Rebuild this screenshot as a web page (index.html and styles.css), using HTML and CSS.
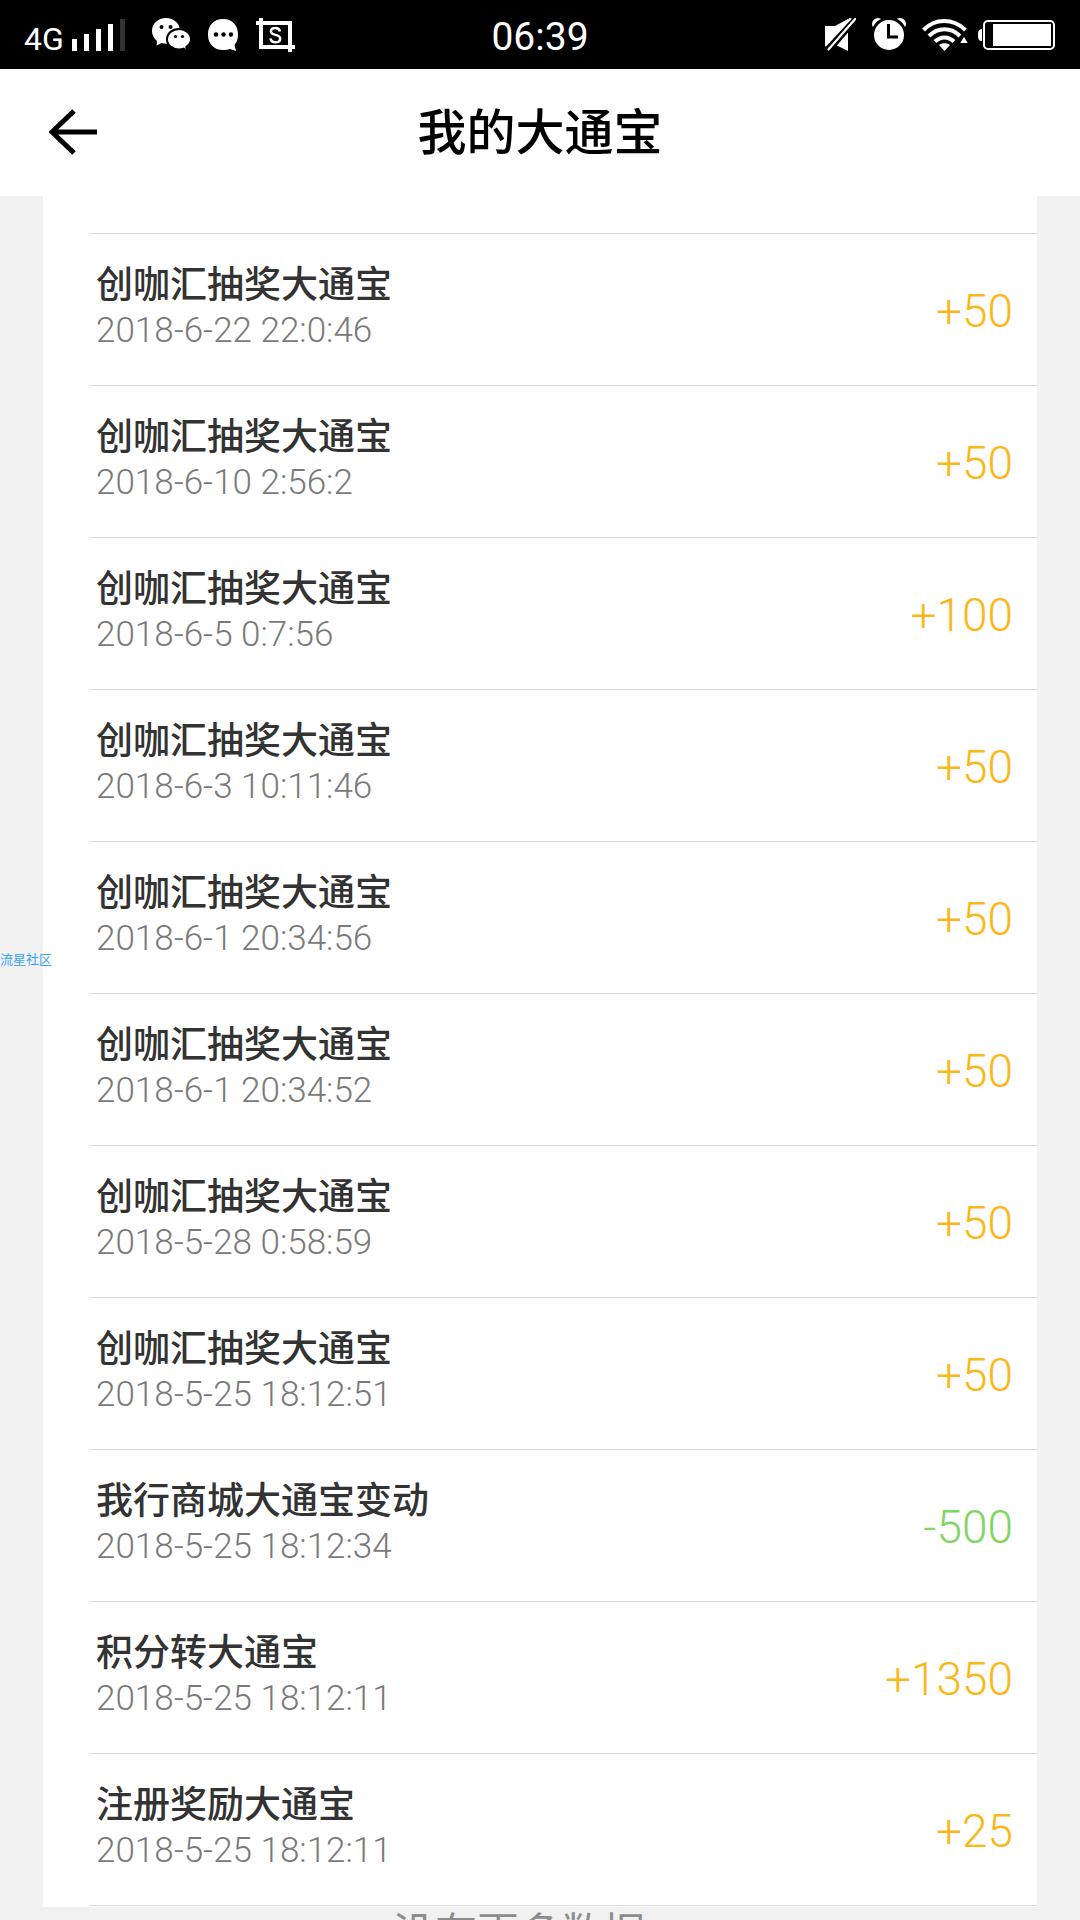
FILE: index.html
```html
<!DOCTYPE html>
<html lang="zh-CN">
<head>
<meta charset="utf-8">
<meta name="viewport" content="width=device-width, initial-scale=1">
<title>我的大通宝</title>
<link rel="stylesheet" href="styles.css">
</head>
<body>
<div class="app">
  <div class="status">
    <div class="status-side">
      <span class="network">4G</span>
      <svg class="signal" width="54" height="32" viewBox="0 0 54 32" fill="#fff" aria-hidden="true"><path d="M0 20h5v12H0zM12 15h5v17h-5zM24 10h5v22h-5zM36 5h5v27h-5z"/><path fill="#333" d="M48 0h5v32h-5z"/></svg>
      <svg class="wechat" width="38" height="34" viewBox="0 0 38 34" aria-hidden="true"><path fill="#fff" d="M14 0C6 0 0 5.500 0 13c0 4 2 7.500 5 10l-.5 4.500 5-2.500c2 .6 4 .8 6.500.7C27 25 28 18 28 13 28 5.500 22 0 14 0z"/><path fill="#fff" stroke="#000" stroke-width="2" d="M27 11c-6.500 0-12 4.300-12 10.200S20.500 31.500 27 31.500c1.700 0 3.200-.2 4.600-.8l3.400 2.800-.7-4.600c2.700-1.900 4.700-4.500 4.700-7.700C39 15.300 33.500 11 27 11z"/><g fill="#000"><circle cx="9.500" cy="9" r="2"/><circle cx="18.500" cy="9" r="2"/><circle cx="23.500" cy="18.500" r="1.600"/><circle cx="30.500" cy="18.500" r="1.600"/></g></svg>
      <svg class="message" width="31" height="32" viewBox="0 0 31 32" aria-hidden="true"><path fill="#fff" d="M15 0C24 0 30 6 30 15.500c0 4-1 7.500-3.500 10.500L28 32l-6-2c-2 .8-4 1-7 1C6 31 0 25 0 15.500S6 0 15 0z"/><g fill="#000"><circle cx="8" cy="15.500" r="2.200"/><circle cx="15.500" cy="15.500" r="2.200"/><circle cx="23" cy="15.500" r="2.200"/></g></svg>
      <svg class="capture" width="39" height="34" viewBox="0 0 39 34" fill="none" stroke="#fff" aria-hidden="true"><path stroke-width="4" d="M0 5h34v29M5 0v29h34"/><path stroke-width="2.500" d="M24 13.500c-.5-2.300-2.200-3.500-4.700-3.500-2.600 0-4.400 1.400-4.400 3.500 0 4.600 9.300 2.200 9.300 7 0 2.400-2 3.800-4.700 3.800s-4.700-1.400-5-3.900"/></svg>
    </div>
    <time class="clock">06:39</time>
    <div class="status-side status-right">
      <svg width="31" height="34" viewBox="0 0 31 34" aria-hidden="true"><path fill="#fff" d="M0 8h10L23 1v32l-12-6H0z"/><path stroke="#000" stroke-width="8" d="M1 34 31-1"/><path stroke="#fff" stroke-width="2.200" d="M0 28 26 0M3 32 31 0"/></svg>
      <svg width="34" height="33" viewBox="0 0 34 33" fill="none" aria-hidden="true"><g fill="#fff"><circle cx="6" cy="6" r="6"/><circle cx="28" cy="6" r="6"/><circle cx="17" cy="17" r="16.500" stroke="#000" stroke-width="3"/></g><path stroke="#000" stroke-width="3" d="M16.500 6v13H26"/></svg>
      <svg width="46" height="32" viewBox="0 0 46 32" fill="none" stroke="#fff" aria-hidden="true"><path stroke-width="4" d="M1.500 11C13-1 31-1 43.500 11M7 17c9-9 22-9 31 0M13 22.500c5.500-5.500 13.500-5.500 19 0"/><path fill="#fff" stroke="none" d="M22.500 32 17 26c3-2.400 8-2.400 11 0z"/><path fill="#fff" stroke="#000" stroke-width="2" d="m42 16 5.500 9h-11z"/></svg>
      <svg class="battery" width="78" height="30" viewBox="0 0 78 30" aria-hidden="true"><path fill="#fff" d="M4 9v12C1 21 0 19 0 15s1-6 4-6zM15 4h58v22H15z"/><rect x="6" y="1" width="70" height="28" rx="4" fill="none" stroke="#fff" stroke-width="2"/></svg>
    </div>
  </div>

  <header class="header">
    <button class="back" type="button" aria-label="返回">
      <svg width="48" height="46" viewBox="0 0 48 46" fill="none" stroke="#000" stroke-width="5" aria-hidden="true"><path d="M25 2 3 23l22 21M3 23h45"/></svg>
    </button>
    <h1 class="title">我的大通宝</h1>
  </header>

  <main class="content">
    <ul class="records">
      <li class="record"><div><h2 class="name">创咖汇抽奖大通宝</h2><time class="date">2018-6-22 22:0:46</time></div><span class="amount">+50</span></li>
      <li class="record"><div><h2 class="name">创咖汇抽奖大通宝</h2><time class="date">2018-6-10 2:56:2</time></div><span class="amount">+50</span></li>
      <li class="record"><div><h2 class="name">创咖汇抽奖大通宝</h2><time class="date">2018-6-5 0:7:56</time></div><span class="amount">+100</span></li>
      <li class="record"><div><h2 class="name">创咖汇抽奖大通宝</h2><time class="date">2018-6-3 10:11:46</time></div><span class="amount">+50</span></li>
      <li class="record"><div><h2 class="name">创咖汇抽奖大通宝</h2><time class="date">2018-6-1 20:34:56</time></div><span class="amount">+50</span></li>
      <li class="record"><div><h2 class="name">创咖汇抽奖大通宝</h2><time class="date">2018-6-1 20:34:52</time></div><span class="amount">+50</span></li>
      <li class="record"><div><h2 class="name">创咖汇抽奖大通宝</h2><time class="date">2018-5-28 0:58:59</time></div><span class="amount">+50</span></li>
      <li class="record"><div><h2 class="name">创咖汇抽奖大通宝</h2><time class="date">2018-5-25 18:12:51</time></div><span class="amount">+50</span></li>
      <li class="record"><div><h2 class="name">我行商城大通宝变动</h2><time class="date">2018-5-25 18:12:34</time></div><span class="amount spent">-500</span></li>
      <li class="record"><div><h2 class="name">积分转大通宝</h2><time class="date">2018-5-25 18:12:11</time></div><span class="amount">+1350</span></li>
      <li class="record"><div><h2 class="name">注册奖励大通宝</h2><time class="date">2018-5-25 18:12:11</time></div><span class="amount">+25</span></li>
    </ul>
    <p class="end">没有更多数据</p>
  </main>
  <span class="watermark">流星社区</span>
</div>
</body>
</html>
```
FILE: styles.css
```css
* {
  box-sizing: border-box;
  margin: 0;
  padding: 0;
}

body {
  background: #f1f1f1;
  font-family: Roboto, "Noto Sans CJK SC", sans-serif;
}

.app {
  position: relative;
  display: flex;
  flex-direction: column;
  height: 100vh;
  overflow: hidden;
}

.status {
  display: grid;
  grid-template-columns: 1fr auto 1fr;
  align-items: center;
  flex: none;
  height: 69px;
  padding: 0 24px;
  background: #000;
  color: #fff;
}

.status-side {
  display: flex;
  align-items: center;
}

.status-right {
  justify-content: flex-end;
  gap: 16px;
}

.network {
  width: 48px;
  padding-top: 8px;
  font-size: 32px;
  line-height: 32px;
}

.wechat {
  margin-left: 26px;
}

.message {
  margin-left: 18px;
}

.capture {
  margin-left: 17px;
}

.battery {
  margin-left: -6px;
}

.clock {
  padding-top: 4px;
  font-size: 39px;
  line-height: 60px;
}

.header {
  display: grid;
  grid-template-columns: 1fr auto 1fr;
  align-items: center;
  flex: none;
  height: 127px;
  padding: 0 49px 2px;
  background: #fff;
}

.back {
  justify-self: start;
  border: 0;
  background: none;
  line-height: 0;
}

.title {
  padding-bottom: 6px;
  color: #000;
  font-family: "Noto Sans CJK SC", sans-serif;
  font-size: 49px;
  font-weight: 500;
  line-height: 72px;
}

.content {
  flex: 1;
  min-height: 0;
  padding: 0 43px;
  overflow: hidden;
}

.records {
  padding: 37px 0 1px 46px;
  background: #fff;
  list-style: none;
}

.record {
  display: flex;
  align-items: center;
  justify-content: space-between;
  height: 152px;
  padding: 0 24px 3px 7px;
  border-top: 1px solid #d8d8d8;
}

.record:last-child {
  height: 153px;
  border-bottom: 1px solid #d8d8d8;
}

.name {
  color: #333;
  font-family: "Noto Sans CJK SC", sans-serif;
  font-size: 37px;
  font-weight: 500;
  line-height: 46px;
}

.date {
  display: block;
  color: #7a7a7a;
  font-size: 35px;
  font-weight: 300;
  line-height: 52px;
}

.amount {
  padding-top: 6px;
  color: #fbb716;
  font-size: 46px;
  font-weight: 300;
  line-height: 60px;
}

.spent {
  color: #7fd663;
}

.end {
  padding-right: 42px;
  color: #8c8c8c;
  font-family: "Noto Sans CJK SC", sans-serif;
  font-size: 42px;
  line-height: 46px;
  text-align: center;
}

.watermark {
  position: absolute;
  top: 50%;
  left: 0;
  color: #36a3f7;
  font-size: 13px;
  line-height: 20px;
  margin-top: -10px;
}
```
